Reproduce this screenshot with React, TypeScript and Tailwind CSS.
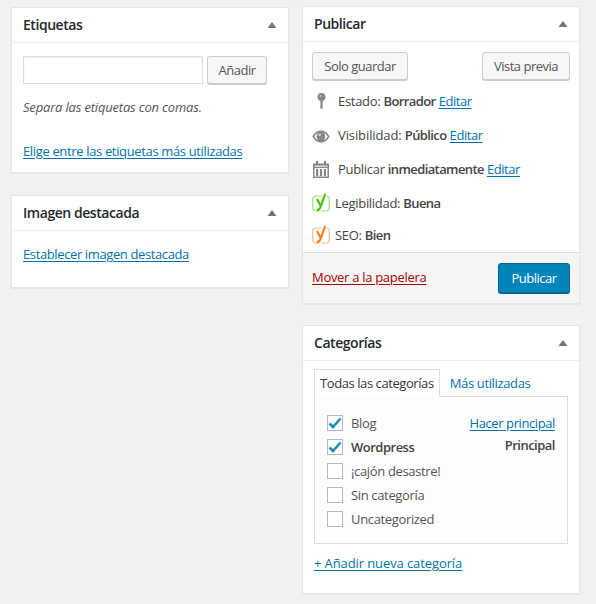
import React from "react";

function Arrow() {
  return (
    <svg width="10" height="6" viewBox="0 0 10 6" className="block">
      <path d="M5 0 L9.5 6 L0.5 6 Z" fill="#72777c" />
    </svg>
  );
}

function Card({ title, className, children }: { title: string; className?: string; children: React.ReactNode }) {
  return (
    <section className={"w-[278px] bg-white border border-[#e5e5e5] shadow-[0_1px_1px_rgba(0,0,0,0.04)] " + (className ?? "")}>
      <header className="h-[35px] border-b border-[#eeeeee] flex items-center justify-between pl-[11px] pr-[11px]">
        <h2 className="text-[14px] font-semibold text-[#23282d] tracking-[-0.45px]">{title}</h2>
        <Arrow />
      </header>
      {children}
    </section>
  );
}

function Btn({ children, className }: { children: React.ReactNode; className?: string }) {
  return (
    <button className={"h-[28px] rounded-[3px] border border-[#cccccc] bg-[#f7f7f7] shadow-[0_1px_0_#cccccc] text-[13px] text-[#555555] tracking-[-0.5px] " + (className ?? "")}>
      {children}
    </button>
  );
}

function A({ children, className }: { children: React.ReactNode; className?: string }) {
  return <a className={"text-[#0073aa] underline underline-offset-2 " + (className ?? "tracking-[-0.35px]")}>{children}</a>;
}

function Pin() {
  return (
    <svg width="9" height="16" viewBox="0 0 9 16">
      <circle cx="4.5" cy="4" r="4" fill="#82878c" />
      <circle cx="3.4" cy="3" r="1" fill="#cfd1d3" />
      <rect x="3.4" y="6" width="2.2" height="10" rx="1.1" fill="#82878c" />
    </svg>
  );
}

function Eye() {
  return (
    <svg width="18" height="13" viewBox="0 0 18 13">
      <path d="M0.3 6.5 C3 2 6 0.5 9 0.5 C12 0.5 15 2 17.7 6.5 C15 11 12 12.5 9 12.5 C6 12.5 3 11 0.3 6.5 Z" fill="#82878c" />
      <path d="M2.2 6.5 C3.8 4.2 5.3 3 6.2 2.6 C5.4 3.4 4.8 4.8 4.8 6.5 C4.8 8.2 5.4 9.6 6.2 10.4 C5.3 10 3.8 8.8 2.2 6.5 Z" fill="#fff" />
      <path d="M15.8 6.5 C14.2 4.2 12.7 3 11.8 2.6 C12.6 3.4 13.2 4.8 13.2 6.5 C13.2 8.2 12.6 9.6 11.8 10.4 C12.7 10 14.2 8.8 15.8 6.5 Z" fill="#fff" />
      <circle cx="7.6" cy="4.8" r="1.3" fill="#d5d7d9" />
    </svg>
  );
}

function Cal() {
  return (
    <svg width="16" height="17" viewBox="0 0 16 17">
      <rect x="0" y="2.5" width="16" height="14.5" fill="#82878c" />
      <rect x="3" y="0" width="2" height="4" fill="#82878c" />
      <rect x="11" y="0" width="2" height="4" fill="#82878c" />
      <rect x="1.5" y="4.5" width="13" height="1.5" fill="#d9dadb" />
      <rect x="1.5" y="7" width="13" height="8.5" fill="#fff" />
      <rect x="3" y="8" width="2.2" height="7" fill="#82878c" />
      <rect x="6.9" y="8" width="2.2" height="7" fill="#82878c" />
      <rect x="10.8" y="8" width="2.2" height="7" fill="#82878c" />
    </svg>
  );
}

function Yoast({ color, stroke }: { color: string; stroke: string }) {
  return (
    <svg width="18" height="19" viewBox="0 0 18 19">
      <rect x="0.7" y="3" width="16.6" height="15" rx="3.2" fill="#fff" stroke={stroke} strokeWidth="1.2" />
      <path d="M5 6.2 L8.6 13 L13.2 1" fill="none" stroke="#fff" strokeWidth="5" />
      <path d="M5 6 L8.8 13.2 M13.2 0.8 L8.8 13.2 C8 15.8 6.8 16.9 4.8 17.4" fill="none" stroke={color} strokeWidth="2.2" />
    </svg>
  );
}

function Row({ icon, children, className }: { icon: React.ReactNode; children: React.ReactNode; className?: string }) {
  return (
    <div className={"flex items-center " + (className ?? "")}>
      {icon}
      <div className="tracking-[-0.3px] whitespace-nowrap">{children}</div>
    </div>
  );
}

function B({ children }: { children: React.ReactNode }) {
  return <b className="font-semibold tracking-[-0.6px]">{children}</b>;
}

function Check({ checked }: { checked?: boolean }) {
  return (
    <span className="w-[16px] h-[16px] border border-[#b4b9be] bg-white flex items-center justify-center shrink-0">
      {checked && (
        <svg width="14" height="12" viewBox="0 0 14 12">
          <path d="M1.5 6.5 L5 10 L12.5 1.5" fill="none" stroke="#1e8cbe" strokeWidth="2.6" />
        </svg>
      )}
    </span>
  );
}

function Cat({ label, checked, bold, right }: { label: string; checked?: boolean; bold?: boolean; right?: React.ReactNode }) {
  return (
    <li className="h-[24px] flex items-center">
      <Check checked={checked} />
      <span className={"ml-[8px] " + (bold ? "font-semibold text-[#444444] tracking-[-0.5px]" : "text-[#555555] tracking-[-0.35px]")}>{label}</span>
      {right}
    </li>
  );
}

export default function App() {
  return (
    <div
      className="w-[596px] h-[604px] overflow-hidden bg-[#f1f1f1] flex items-start gap-[13px] pl-[11px] text-[13px] leading-[18px] text-[#444444]"
      style={{ fontFamily: '"Open Sans", sans-serif' }}
    >
      <div className="w-[278px] flex flex-col gap-[22px] pt-[7px]">
        <Card title="Etiquetas">
          <div className="px-[11px] pt-[13px] pb-[12px]">
            <div className="flex gap-[4px]">
              <input className="w-[180px] h-[28px] bg-white border border-[#dddddd] shadow-[inset_0_1px_2px_rgba(0,0,0,0.07)]" />
              <Btn className="w-[60px]">Añadir</Btn>
            </div>
            <p className="mt-[14px] italic text-[#555555] tracking-[-0.18px]">Separa las etiquetas con comas.</p>
            <p className="mt-[26px]"><A>Elige entre las etiquetas más utilizadas</A></p>
          </div>
        </Card>
        <Card title="Imagen destacada">
          <div className="px-[11px] pt-[14px] pb-[24px]">
            <A className="tracking-[-0.38px]">Establecer imagen destacada</A>
          </div>
        </Card>
      </div>

      <div className="w-[278px] flex flex-col gap-[21px] pt-[6px]">
        <Card title="Publicar">
          <div className="px-[9px] pt-[10px] flex justify-between">
            <Btn className="w-[96px]">Solo guardar</Btn>
            <Btn className="w-[88px]">Vista previa</Btn>
          </div>
          <div className="pl-[9px] pt-[12px] text-[#444444]">
            <Row className="h-[18px]" icon={<span className="w-[26px] pl-[5px] flex"><Pin /></span>}>
              Estado: <B>Borrador</B> <A className="tracking-[-0.45px]">Editar</A>
            </Row>
            <Row className="h-[18px] mt-[16px]" icon={<span className="w-[26px] pt-[2px] flex"><Eye /></span>}>
              <span className="tracking-[-0.1px]">Visibilidad:</span> <B>Público</B> <A className="tracking-[-0.45px]">Editar</A>
            </Row>
            <Row className="h-[18px] mt-[16px]" icon={<span className="w-[26px] pl-[1px] flex"><Cal /></span>}>
              Publicar <B>inmediatamente</B> <A className="tracking-[-0.45px]">Editar</A>
            </Row>
            <Row className="h-[19px] mt-[15px]" icon={<span className="w-[23px] flex"><Yoast color="#4ec00e" stroke="#9be07a" /></span>}>
              Legibilidad: <B>Buena</B>
            </Row>
            <Row className="h-[19px] mt-[13px]" icon={<span className="w-[23px] flex"><Yoast color="#f5821f" stroke="#fbbd8a" /></span>}>
              SEO: <B>Bien</B>
            </Row>
          </div>
          <footer className="mt-[8px] h-[51px] bg-[#f5f5f5] border-t border-[#dddddd] flex items-center justify-between pl-[9px] pr-[9px]">
            <a className="text-[#a00] underline underline-offset-2 tracking-[-0.3px] pb-[2px]">Mover a la papelera</a>
            <button className="w-[72px] h-[30px] rounded-[3px] bg-[#0085ba] border border-[#006799] shadow-[0_1px_0_#006799] text-white text-[13px] tracking-[-0.5px]">Publicar</button>
          </footer>
        </Card>

        <Card title="Categorías">
          <div className="px-[11px] pt-[8px] pb-[21px]">
            <div className="flex h-[27px] relative z-10">
              <div className="h-[28px] border border-[#dddddd] border-b-white bg-white px-[5px] flex items-center text-[#32373c] tracking-[-0.42px] whitespace-nowrap">Todas las categorías</div>
              <div className="h-[27px] px-[10px] flex items-center text-[#0073aa] tracking-[-0.35px] whitespace-nowrap">Más utilizadas</div>
            </div>
            <div className="w-[254px] h-[148px] border border-[#dddddd] bg-[#fdfdfd] pl-[12px] pr-[12px] pt-[14px]">
              <ul>
                <Cat label="Blog" checked right={<A className="ml-auto tracking-[-0.4px]">Hacer principal</A>} />
                <Cat label="Wordpress" checked bold right={<span className="ml-auto font-semibold text-[#444444] tracking-[-0.5px] -mt-[4px]">Principal</span>} />
                <Cat label="¡cajón desastre!" />
                <Cat label="Sin categoría" />
                <Cat label="Uncategorized" />
              </ul>
            </div>
            <p className="mt-[10px]"><A className="font-medium tracking-[-0.1px]">+ Añadir nueva categoría</A></p>
          </div>
        </Card>
      </div>
    </div>
  );
}
